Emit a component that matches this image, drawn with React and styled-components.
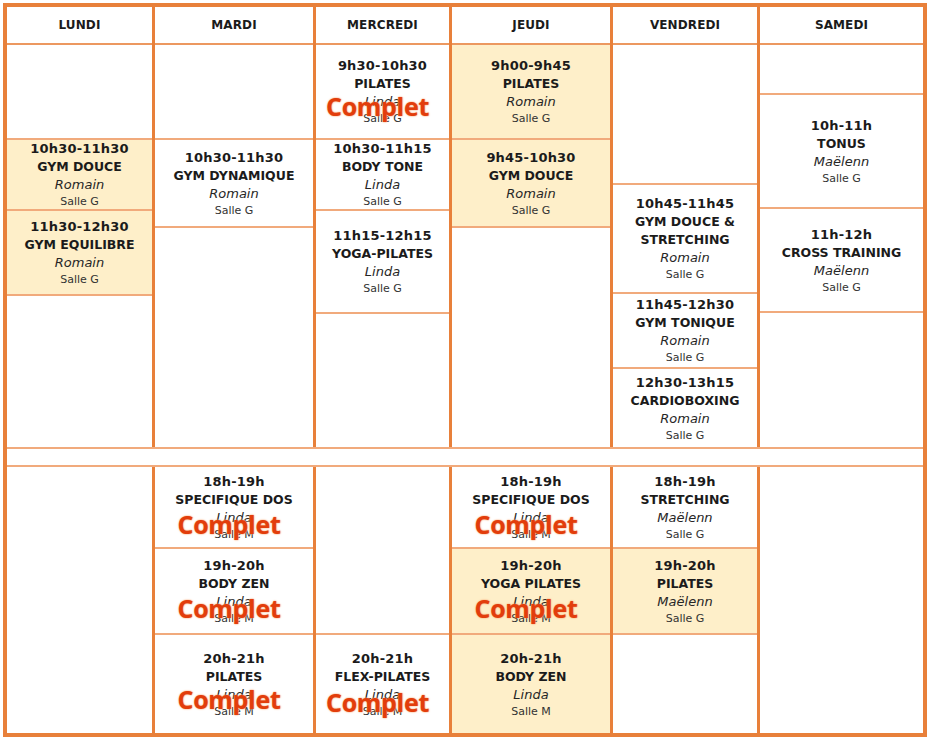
import React from "react";
import styled, { createGlobalStyle } from "styled-components";

const ORANGE = "#e8803a";
const LINE = "#f1aa7c";
const BEIGE = "#feefc9";

const GlobalStyle = createGlobalStyle`
  html, body {
    margin: 0;
    padding: 0;
    background: #ffffff;
  }
  body {
    font-family: "DejaVu Sans", Verdana, sans-serif;
    color: #1b1b1b;
  }
  * {
    box-sizing: border-box;
  }
`;

const Frame = styled.div`
  margin: 3px 0 0 3px;
  width: 924px;
  height: 734px;
  border: 4px solid ${ORANGE};
  display: flex;
  flex-direction: column;
  background: #fff;
`;

const Columns = styled.div`
  display: grid;
  grid-template-columns: 145px 158px 133px 158px 144px 163px;
  column-gap: 3px;
  background: ${ORANGE};
  height: ${(p) => p.$h}px;
`;

const DayHead = styled.div`
  background: #fff;
  border-bottom: 2px solid #ec9860;
  display: flex;
  align-items: center;
  justify-content: center;
  font-size: 12px;
  font-weight: bold;
  letter-spacing: 0.1px;
`;

const Stack = styled.div`
  display: flex;
  flex-direction: column;
  background: #fff;
`;

const Slot = styled.div`
  flex: ${(p) => (p.$h ? `0 0 ${p.$h}px` : "1 1 auto")};
  background: ${(p) => (p.$fill ? BEIGE : "#fff")};
  border-top: 2px solid ${LINE};
  display: flex;
  align-items: center;
  justify-content: center;
  text-align: center;

  &:first-child {
    border-top: none;
  }
`;

const Spacer = styled.div`
  height: 20px;
  background: #fff;
  border-top: 2px solid ${LINE};
  border-bottom: 2px solid ${LINE};
`;

const Course = styled.div`
  position: relative;
  display: flex;
  flex-direction: column;
  align-items: center;
`;

const Time = styled.div`
  font-size: 13px;
  font-weight: bold;
  line-height: 18px;
  letter-spacing: 0.2px;
`;

const Name = styled.div`
  font-size: 12.5px;
  font-weight: bold;
  line-height: 18px;
  white-space: pre-line;
`;

const Coach = styled.div`
  font-size: 13px;
  font-style: italic;
  line-height: 18px;
  color: #262626;
`;

const Room = styled.div`
  font-size: 11px;
  line-height: 15px;
  color: #333;
`;

const Full = styled.div`
  position: absolute;
  left: 50%;
  top: ${(p) => p.$top}px;
  transform: translateX(calc(-50% - 5px));
  font-family: "Open Sans", "DejaVu Sans", sans-serif;
  font-weight: bold;
  font-size: 25px;
  line-height: 25px;
  letter-spacing: -0.3px;
  color: #e23d0c;
  white-space: nowrap;
  text-shadow: 0 0 2px #f6a06a, 0 0 1px #f8b080;
`;

const days = ["LUNDI", "MARDI", "MERCREDI", "JEUDI", "VENDREDI", "SAMEDI"];

const c = (time, name, coach, room, extra = {}) => ({ time, name, coach, room, ...extra });

const morning = [
  [
    { h: 93 },
    c("10h30-11h30", "GYM DOUCE", "Romain", "Salle G", { h: 69, fill: true }),
    c("11h30-12h30", "GYM EQUILIBRE", "Romain", "Salle G", { h: 85, fill: true }),
    {},
  ],
  [
    { h: 93 },
    c("10h30-11h30", "GYM DYNAMIQUE", "Romain", "Salle G", { h: 88 }),
    {},
  ],
  [
    c("9h30-10h30", "PILATES", "Linda", "Salle G", { h: 93, full: 37 }),
    c("10h30-11h15", "BODY TONE", "Linda", "Salle G", { h: 70 }),
    c("11h15-12h15", "YOGA-PILATES", "Linda", "Salle G", { h: 103 }),
    {},
  ],
  [
    c("9h00-9h45", "PILATES", "Romain", "Salle G", { h: 93, fill: true }),
    c("9h45-10h30", "GYM DOUCE", "Romain", "Salle G", { h: 88, fill: true }),
    {},
  ],
  [
    { h: 138 },
    c("10h45-11h45", "GYM DOUCE &\nSTRETCHING", "Romain", "Salle G", { h: 109 }),
    c("11h45-12h30", "GYM TONIQUE", "Romain", "Salle G", { h: 75 }),
    c("12h30-13h15", "CARDIOBOXING", "Romain", "Salle G"),
  ],
  [
    { h: 48 },
    c("10h-11h", "TONUS", "Maëlenn", "Salle G", { h: 114 }),
    c("11h-12h", "CROSS TRAINING", "Maëlenn", "Salle G", { h: 104 }),
    {},
  ],
];

const evening = [
  [{}],
  [
    c("18h-19h", "SPECIFIQUE DOS", "Linda", "Salle M", { h: 80, full: 39 }),
    c("19h-20h", "BODY ZEN", "Linda", "Salle M", { h: 86, full: 39 }),
    c("20h-21h", "PILATES", "Linda", "Salle M", { full: 37 }),
  ],
  [
    { h: 166 },
    c("20h-21h", "FLEX-PILATES", "Linda", "Salle M", { full: 40 }),
  ],
  [
    c("18h-19h", "SPECIFIQUE DOS", "Linda", "Salle M", { h: 80, full: 39 }),
    c("19h-20h", "YOGA PILATES", "Linda", "Salle M", { h: 86, fill: true, full: 39 }),
    c("20h-21h", "BODY ZEN", "Linda", "Salle M", { fill: true }),
  ],
  [
    c("18h-19h", "STRETCHING", "Maëlenn", "Salle G", { h: 80 }),
    c("19h-20h", "PILATES", "Maëlenn", "Salle G", { h: 86, fill: true }),
    {},
  ],
  [{}],
];

function Cell({ slot }) {
  return (
    <Slot $h={slot.h} $fill={slot.fill}>
      {slot.time && (
        <Course>
          <Time>{slot.time}</Time>
          <Name>{slot.name}</Name>
          <Coach>{slot.coach}</Coach>
          <Room>{slot.room}</Room>
          {slot.full && <Full $top={slot.full}>Complet</Full>}
        </Course>
      )}
    </Slot>
  );
}

function Section({ cols, h }) {
  return (
    <Columns $h={h}>
      {cols.map((col, i) => (
        <Stack key={i}>
          {col.map((slot, j) => (
            <Cell key={j} slot={slot} />
          ))}
        </Stack>
      ))}
    </Columns>
  );
}

export default function App() {
  return (
    <>
      <GlobalStyle />
      <Frame>
        <Columns $h={38}>
          {days.map((d) => (
            <DayHead key={d}>{d}</DayHead>
          ))}
        </Columns>
        <Section cols={morning} h={402} />
        <Spacer />
        <Section cols={evening} h={266} />
      </Frame>
    </>
  );
}
